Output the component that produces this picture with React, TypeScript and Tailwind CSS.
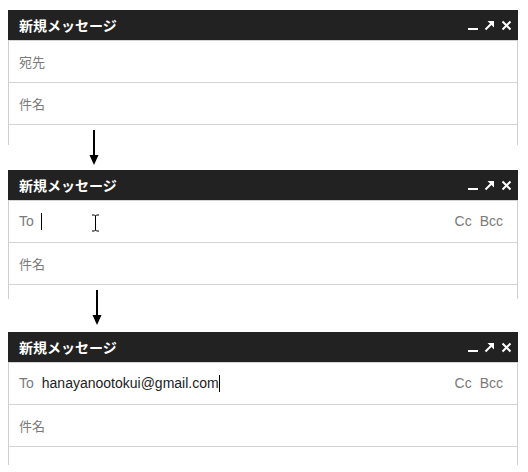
import React from "react";

const jp = { fontFamily: '"Noto Sans CJK JP", "Noto Sans", sans-serif' };
const ar = { fontFamily: '"Liberation Sans", Arial, sans-serif' };

function HeaderIcons() {
  return (
    <div className="flex items-center gap-[6px] pr-[6px]">
      <svg width="10" height="12" viewBox="0 0 10 12">
        <rect x="0" y="9" width="10" height="2" fill="#fff" />
      </svg>
      <svg width="11" height="11" viewBox="0 0 11 11">
        <path d="M1.5 9.5 L8.5 2.5" stroke="#fff" strokeWidth="2" />
        <path d="M3.5 1 L10 1 L10 7.5 Z" fill="#fff" />
      </svg>
      <svg width="11" height="11" viewBox="0 0 11 11">
        <path d="M1.5 1.5 L9.5 9.5 M9.5 1.5 L1.5 9.5" stroke="#fff" strokeWidth="2" />
      </svg>
    </div>
  );
}

function Panel({
  first,
  tail,
}: {
  first: React.ReactNode;
  tail: number;
}) {
  return (
    <div className="w-[510px]">
      <div className="h-[30px] bg-[#222222] flex items-center justify-between pl-[11px]">
        <span className="text-white font-bold text-[14px] leading-none" style={jp}>
          新規メッセージ
        </span>
        <HeaderIcons />
      </div>
      <div className="border-l border-r border-[#cfcfcf]">
        <div className="h-[43px] border-t border-b border-[#d4d4d4] flex items-center pl-[10px] pr-[14px]">
          {first}
        </div>
        <div className="h-[42px] border-b border-[#d4d4d4] flex items-center pl-[10px]">
          <span className="text-[13px] text-[#7a7a7a]" style={jp}>
            件名
          </span>
        </div>
        <div style={{ height: tail }} />
      </div>
    </div>
  );
}

function Arrow({ left, top, h }: { left: number; top: number; h: number }) {
  return (
    <svg
      className="absolute"
      style={{ left, top }}
      width="12"
      height={h}
      viewBox={`0 0 12 ${h}`}
    >
      <rect x="5" y="0" width="2" height={h - 8} fill="#000" />
      <path d={`M1.5 ${h - 10} L10.5 ${h - 10} L6 ${h} Z`} fill="#000" />
    </svg>
  );
}

export default function App() {
  return (
    <div className="relative w-[528px] h-[472px] bg-white overflow-hidden">
      <div className="flex flex-col pl-[8px] pt-[10px]">
        <Panel
          first={
            <span className="text-[13px] text-[#7a7a7a]" style={jp}>
              宛先
            </span>
          }
          tail={20}
        />
        <div className="h-[25px]" />
        <Panel
          first={
            <div className="flex items-center w-full">
              <span className="text-[14px] text-[#7a7a7a]" style={ar}>
                To
              </span>
              <span className="ml-[7px] w-[1px] h-[17px] bg-black" />
              <span className="flex-1" />
              <span className="text-[14px] text-[#7a7a7a]" style={ar}>
                Cc
              </span>
              <span className="ml-[8px] text-[14px] text-[#7a7a7a]" style={ar}>
                Bcc
              </span>
            </div>
          }
          tail={14}
        />
        <div className="h-[33px]" />
        <Panel
          first={
            <div className="flex items-center w-full">
              <span className="text-[14px] text-[#7a7a7a]" style={ar}>
                To
              </span>
              <span className="ml-[8px] text-[14px] text-[#222]" style={ar}>
                hanayanootokui@gmail.com
              </span>
              <span className="w-[1px] h-[17px] bg-black" />
              <span className="flex-1" />
              <span className="text-[14px] text-[#7a7a7a]" style={ar}>
                Cc
              </span>
              <span className="ml-[8px] text-[14px] text-[#7a7a7a]" style={ar}>
                Bcc
              </span>
            </div>
          }
          tail={18}
        />
      </div>
      <Arrow left={88} top={130} h={35} />
      <Arrow left={91} top={290} h={35} />
      <svg className="absolute" style={{ left: 91, top: 214 }} width="9" height="18" viewBox="0 0 9 18">
        <path d="M1 1 L3.5 1 L4.5 2 L5.5 1 L8 1 M4.5 2 L4.5 16 M1 17 L3.5 17 L4.5 16 L5.5 17 L8 17" stroke="#000" strokeWidth="1" fill="none" />
      </svg>
    </div>
  );
}
